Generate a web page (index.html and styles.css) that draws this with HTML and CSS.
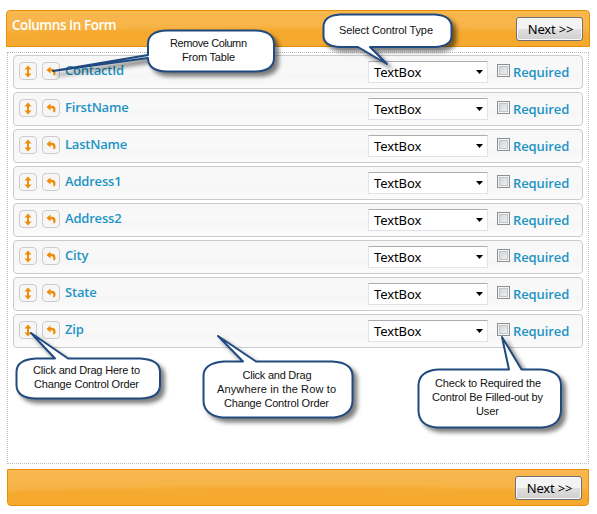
FILE: index.html
```html
<!DOCTYPE html>
<html lang="en">
<head>
<meta charset="utf-8">
<title>Columns In Form</title>
<link rel="stylesheet" href="styles.css">
</head>
<body>
<svg class="defs" aria-hidden="true">
  <symbol id="move" viewBox="0 0 16 16"><path d="M8 2.500 11.500 6.500H9v4h2.500L8 14.500 4.500 10.500H7v-4H4.500Z"/></symbol>
  <symbol id="undo" viewBox="0 0 16 16"><path d="M3.500 7 7.500 3.500v2.300h2.200Q12.500 6.500 12.500 9.500V11l-1 1.300h-1.500Q11 8.800 9 8.200H7.500v2.300Z"/></symbol>
</svg>
<main class="form">
  <header class="bar bar-top"><h1>Columns In Form</h1><button class="next">Next &gt;&gt;</button></header>
  <div class="list" id="list"></div>
  <footer class="bar bar-bottom"><button class="next">Next &gt;&gt;</button></footer>
</main>
<svg class="notes" width="597" height="514" viewBox="0 0 597 514">
  <g class="bubbles">
    <path d="M167 30.500H255Q274 31 274 44V58Q274 71 255 71.500H167Q148 71 148 58L53 71 148 55V44Q148 31 167 30.500Z"/>
    <path d="M340 14.500H435Q451.500 15.500 451.500 27V36Q451.500 46 435 47H370L387 64 358 47H340Q323.500 46 323.500 36V27Q323.500 15.500 340 14.500Z"/>
    <path d="M36 358.500H55L31 333 68 358.500H140Q160 359.500 160 372V385Q160 398 140 398.500H36Q16.500 398 16.500 385V372Q16.500 359.500 36 358.500Z"/>
    <path d="M224 361.500H243L218 336 256 361.500H332Q352.500 362.500 352.500 376V401Q352 415 334 417.500H222Q204 415 203.500 401V376Q203.500 363 224 361.500Z"/>
    <path d="M438 369.500H509L502 337 521.500 369.500H541Q561 371 561 385V411Q560 426 542 427.500H437Q419 426 418.500 411V385Q419 371 438 369.500Z"/>
  </g>
  <path class="spike" d="M53 71 148 56.500"/>
  <g class="words">
    <text x="208.500" y="47" textLength="77">Remove Column</text><text x="208.500" y="61" textLength="53">From Table</text>
    <text x="386" y="34" textLength="94">Select Control Type</text>
    <text x="86.500" y="374" textLength="107">Click and Drag Here to</text><text x="86.500" y="388" textLength="105">Change Control Order</text>
    <text x="277" y="379" textLength="69">Click and Drag</text><text x="276.500" y="393" textLength="119">Anywhere in the Row to</text><text x="276.500" y="407" textLength="105">Change Control Order</text>
    <text x="488" y="387" textLength="106">Check to Required the</text><text x="487.500" y="401" textLength="111">Control Be Filled-out by</text><text x="487.500" y="415" textLength="23">User</text>
  </g>
</svg>
<script src="rows.js"></script>
</body>
</html>
```
FILE: styles.css
```css
* { box-sizing: border-box; }
body { margin: 0; width: 597px; height: 514px; overflow: hidden; background: #fff; font-family: "Open Sans", sans-serif; }
.defs { display: none; }
.form { display: flex; flex-direction: column; padding: 10px 7px 0 6px; }
.bar { position: relative; display: flex; align-items: center; justify-content: space-between; height: 37px; border: 1px solid #e78f08; background: radial-gradient(ellipse 500px 20px at 50% 100%, #f6a92f 0 80%, #f6a92f00 100%), linear-gradient(#f8b850, #f6ae3c); padding: 0 6px 0 5px; }
.bar-top { border-radius: 4px 4px 0 0; }
.bar-bottom { width: 582px; margin: 5px 0 0 1px; border-radius: 0 0 4px 4px; justify-content: flex-end; }
h1 { margin: 0 0 7px; color: #fff; font: 600 13.500px/20px "Open Sans", sans-serif; letter-spacing: -.45px; }
.next { width: 67px; height: 24px; padding: 1px 0 0 2px; border: 1px solid #707070; border-radius: 3px; background: linear-gradient(#f3f3f3 0 48%, #dfdfdf 52%, #cfcfcf); box-shadow: inset 0 0 0 1px #fafafa; color: #000; font: 13px/18px "Noto Sans", sans-serif; letter-spacing: -.2px; }
.list { display: flex; flex-direction: column; gap: 3px; width: 582px; height: 412px; margin: 5px 0 0 1px; padding: 2px 5px; border: 1px dotted #bbb; }
.row { display: flex; align-items: center; height: 34px; padding: 0 13px 0 5px; border: 1px solid #ccc; border-radius: 4px; background: linear-gradient(#f7f7f7 0, #f9f9f9 48%, #f6f6f6 60%, #fbfbfb); color: #1c94c4; font-size: 13px; font-weight: 600; }
.tool { display: flex; align-items: center; justify-content: center; width: 18px; height: 18px; margin: 0 5px 2px 0; border: 1px solid #ccc; border-radius: 4px; background: #f6f6f6; }
.tool svg { flex: none; width: 16px; height: 16px; fill: #ef8c08; }
.name { flex: 1; margin: 0 0 5px; line-height: 18px; letter-spacing: -.2px; }
.select { display: flex; align-items: center; justify-content: space-between; width: 120px; height: 22px; margin-right: 9px; padding: 0 4px 0 5px; border: 1px solid #e2e3ea; border-top-color: #abadb3; background: #fff; color: #000; font: 13px/18px "Noto Sans", sans-serif; letter-spacing: -.1px; }
.select svg { width: 7px; height: 4px; }
.check { width: 13px; height: 13px; margin: 0 3px 3px 0; border: 1px solid #8e8f8f; background: linear-gradient(135deg, #c9ced5, #f6f6f6); box-shadow: inset 0 0 0 1px #f4f4f4, inset 0 0 0 2px #bfc5cb; }
.required { width: 56px; line-height: 18px; letter-spacing: -.1px; }
.notes { position: absolute; top: 0; left: 0; }
.bubbles { fill: #fff; stroke: #204b80; stroke-width: 2; stroke-linejoin: round; filter: drop-shadow(4px 4px 2px rgba(0, 0, 0, .5)); }
.spike { stroke: #204b80; stroke-width: 1; opacity: .35; }
.words { fill: #111; font: 11px "Liberation Sans", sans-serif; text-anchor: middle; }
```
FILE: rows.js
```javascript
const columns = ["ContactId", "FirstName", "LastName", "Address1", "Address2", "City", "State", "Zip"];
document.getElementById("list").innerHTML = columns.map(name => `
  <div class="row">
    <span class="tool"><svg><use href="#move"/></svg></span>
    <span class="tool"><svg><use href="#undo"/></svg></span>
    <span class="name">${name}</span>
    <span class="select">TextBox<svg viewBox="0 0 7 4"><path d="M0 0h7L3.500 4Z"/></svg></span>
    <span class="check"></span><span class="required">Required</span>
  </div>`).join("");
```
